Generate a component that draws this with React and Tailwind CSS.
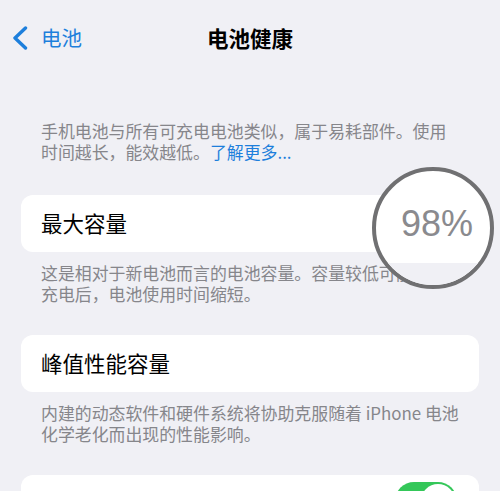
import React from "react";

export default function App() {
  const font = { fontFamily: '"Noto Sans CJK SC", "Noto Sans", sans-serif' };
  return (
    <div
      className="relative w-[500px] h-[491px] overflow-hidden bg-[#f0f0f5]"
      style={font}
    >
      {/* Nav bar */}
      <div className="relative h-[75px] flex items-center">
        <div className="flex items-center pl-[12px] text-[#1d7fdc]">
          <svg width="17" height="24" viewBox="0 0 17 24" className="mr-[12px]">
            <path
              d="M13.5 2 L3 12 L13.5 22"
              fill="none"
              stroke="#1d7fdc"
              strokeWidth="3.4"
              strokeLinecap="round"
              strokeLinejoin="round"
            />
          </svg>
          <span className="text-[20.5px] leading-none">电池</span>
        </div>
        <div className="absolute left-0 right-0 text-center text-[21.5px] font-bold text-black leading-none">
          电池健康
        </div>
      </div>

      {/* Footnote 1 */}
      <div className="mt-[45px] px-[41px] text-[16.9px] leading-[21px] text-[#86868b] whitespace-nowrap">
        手机电池与所有可充电电池类似，属于易耗部件。使用
        <br />
        时间越长，能效越低。<span className="text-[#1d7fdc]">了解更多...</span>
      </div>

      {/* Card 1 */}
      <div className="mt-[33px] mx-[21px] h-[57px] rounded-[12px] bg-white px-[20px] flex items-center text-[21.5px] text-black">
        最大容量
      </div>

      {/* Footnote 2 */}
      <div className="mt-[10px] px-[41px] text-[16.9px] leading-[21px] text-[#86868b] whitespace-nowrap">
        这是相对于新电池而言的电池容量。容量较低可能导致
        <br />
        充电后，电池使用时间缩短。
      </div>

      {/* Card 2 */}
      <div className="mt-[31px] mx-[21px] h-[57px] rounded-[12px] bg-white px-[20px] flex items-center text-[21.5px] text-black">
        峰值性能容量
      </div>

      {/* Footnote 3 */}
      <div className="mt-[10px] px-[41px] text-[16.9px] leading-[21px] text-[#86868b] whitespace-nowrap">
        内建的动态软件和硬件系统将协助克服随着 iPhone 电池
        <br />
        化学老化而出现的性能影响。
      </div>

      {/* Card 3 */}
      <div className="mt-[31px] mx-[21px] h-[57px] rounded-[12px] bg-white px-[20px] flex items-start justify-between text-[21.5px] text-black">
        <span className="mt-[13px]">优化电池充电</span>
        <div className="mt-[7px] mr-[2px] w-[62px] h-[38px] rounded-full bg-[#34c759] relative">
          <div className="absolute right-[2px] top-[2px] w-[34px] h-[34px] rounded-full bg-white"></div>
        </div>
      </div>

      {/* Magnifier */}
      <div className="absolute left-[372px] top-[167px] w-[122px] h-[122px] rounded-full border-[4px] border-[#707072] overflow-hidden bg-white">
        <div className="absolute left-0 right-0 top-[92px] bottom-0 bg-[#f0f0f5]"></div>
        <div
          className="absolute left-0 right-0 top-[35px] text-center text-[36px] leading-none text-[#8a8a8e] pl-[8px]"
          style={{ fontFamily: '"Liberation Sans", Arial, sans-serif' }}
        >
          98%
        </div>
      </div>
    </div>
  );
}
